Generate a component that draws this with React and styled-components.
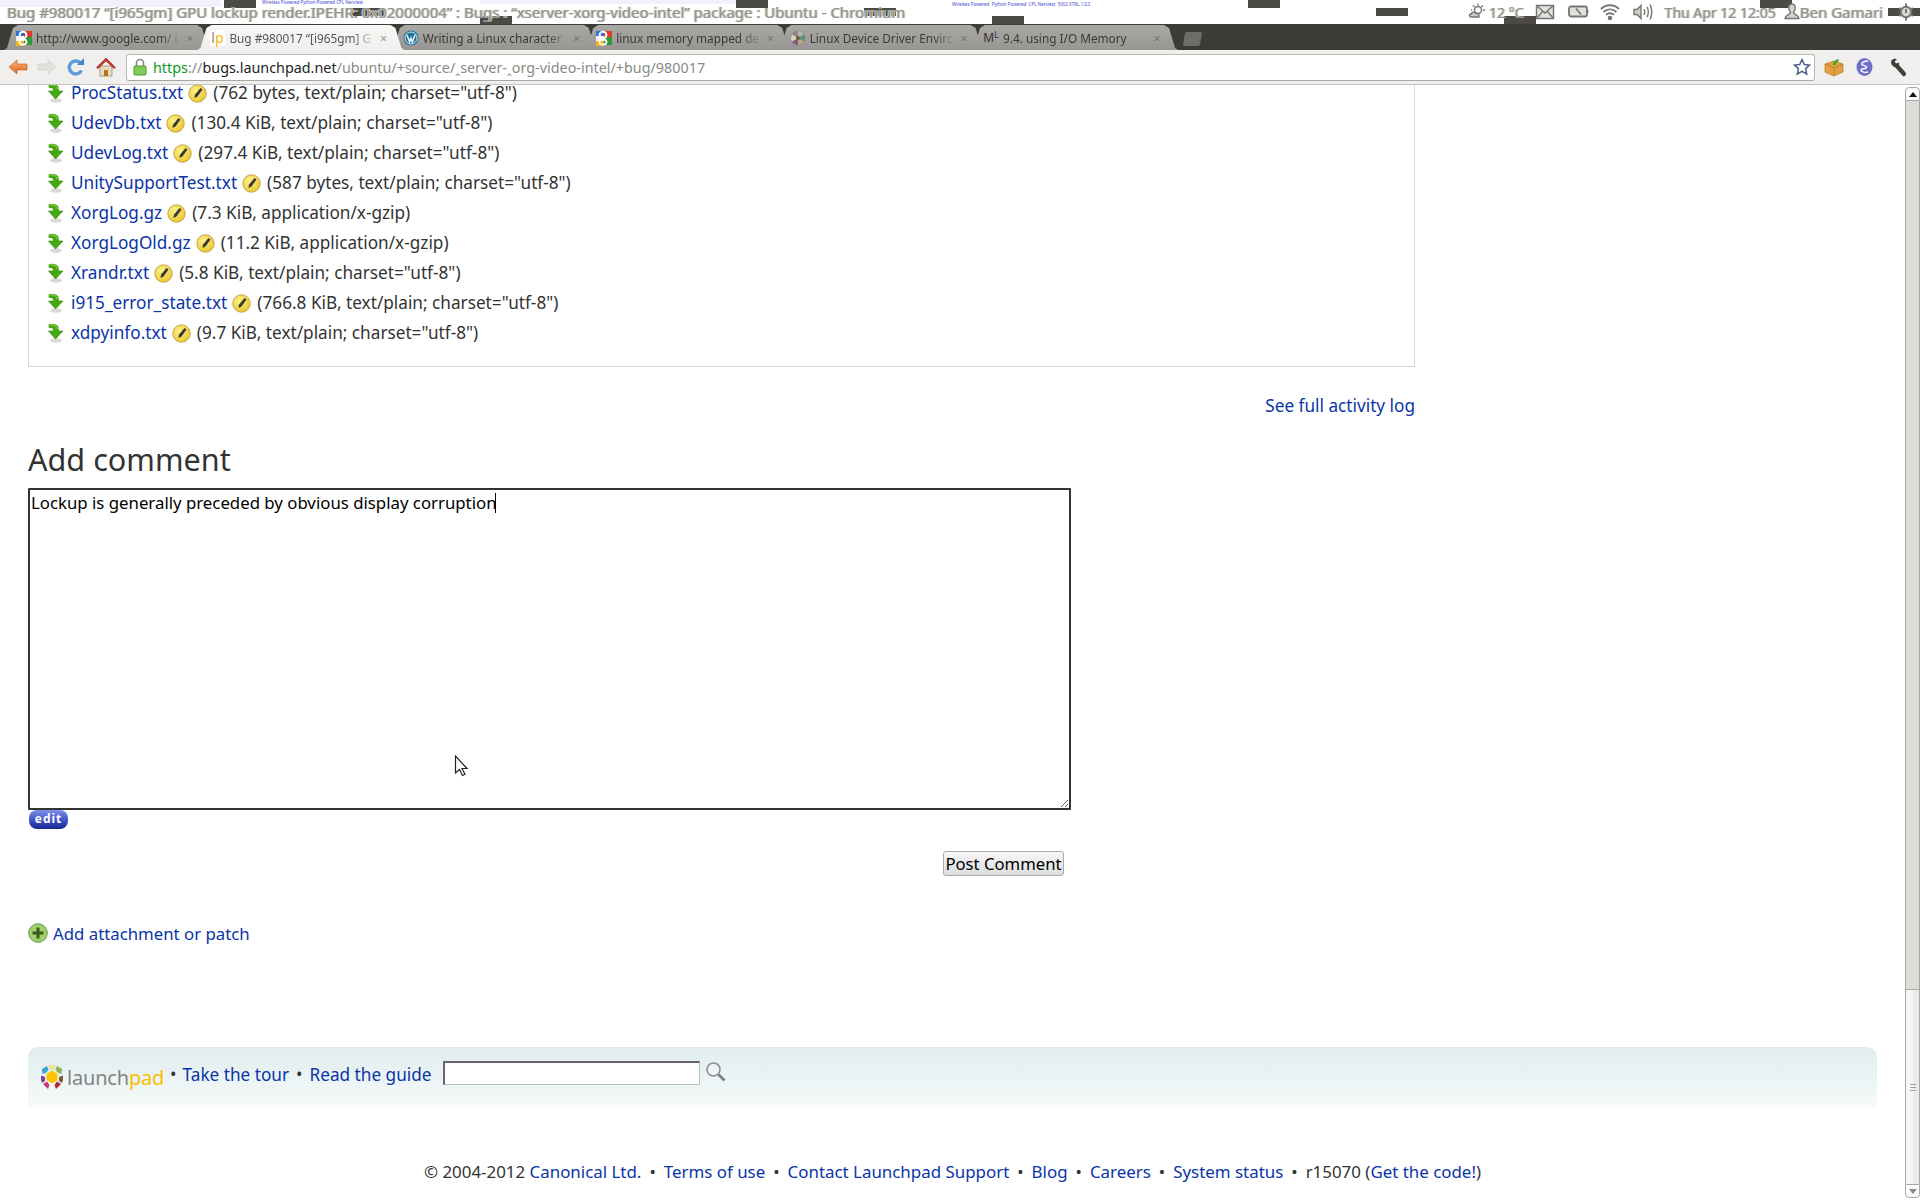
import React from 'react'
import styled, { createGlobalStyle } from 'styled-components'

const FONT = '"Noto Sans", "Open Sans", sans-serif'

const GlobalStyle = createGlobalStyle`
  html, body {
    margin: 0;
    padding: 0;
    background: #fff;
    overflow: hidden;
  }
  body {
    font-family: ${FONT};
    font-size: 17px;
    color: #333;
  }
  * {
    box-sizing: border-box;
  }
`

const Page = styled.div`
  position: relative;
  width: 1920px;
  height: 1200px;
  display: flex;
  flex-direction: column;
  overflow: hidden;
`

/* top panel */
const TopBar = styled.div`
  position: relative;
  height: 24px;
  flex: none;
  background: #fff;
  display: flex;
  align-items: center;
  padding-left: 7px;
  overflow: hidden;
`
const Chip = styled.span`
  position: absolute;
  left: ${p => p.$x}px;
  top: ${p => p.$y}px;
  width: 32px;
  height: 8px;
  background: #4c4a44;
`
const Patch = styled.span`
  position: absolute;
  top: 0;
  left: ${p => p.$x}px;
  width: ${p => p.$w}px;
  height: ${p => p.$h}px;
  background: #f1f0fc;
`
const TinyText = styled.span`
  position: absolute;
  top: ${p => p.$y}px;
  left: ${p => p.$x}px;
  font-size: 4.5px;
  line-height: 5px;
  color: #4848d0;
  white-space: nowrap;
`
const WindowTitle = styled.span`
  position: relative;
  font-size: 15px;
  line-height: 24px;
  color: #94948c;
  text-shadow: -1px 0 0 #b4d6ea, 1px 0 0 #e6cda2;
  white-space: nowrap;
`
const Indicators = styled.div`
  position: relative;
  margin-left: auto;
  display: flex;
  align-items: center;
  height: 24px;
  padding-right: 6px;
`
const PanelText = styled.span`
  font-size: ${p => p.$size || 14}px;
  color: #94948c;
  text-shadow: -1px 0 0 #b4d6ea, 1px 0 0 #e6cda2;
  white-space: nowrap;
  margin-left: ${p => p.$ml || 0}px;
`
const PanelIcon = styled.svg`
  flex: none;
  width: ${p => p.$w || 20}px;
  height: 20px;
  margin-left: ${p => p.$ml || 0}px;
  fill: none;
  stroke: #77756f;
  stroke-width: 1.4;
`

/* tab strip */
const TabStrip = styled.div`
  height: 26px;
  flex: none;
  background: #3c3b37;
  display: flex;
  align-items: flex-end;
  padding-left: 4px;
`
const Tab = styled.div`
  position: relative;
  z-index: ${p => (p.$active ? 2 : 1)};
  width: 207px;
  height: 25px;
  margin-right: -13.6px;
  padding: 0 14px 0 12px;
  display: flex;
  align-items: center;
  background: ${p =>
    p.$active
      ? 'linear-gradient(#f8f7f6, #f0efee)'
      : 'linear-gradient(#a9a8a4, #979692)'};
  clip-path: polygon(0 100%, 3px 92%, 9px 12%, 14px 0, calc(100% - 14px) 0, calc(100% - 9px) 12%, calc(100% - 3px) 92%, 100% 100%);
`
const TabIcon = styled.span`
  flex: none;
  width: 16px;
  height: 16px;
  display: flex;
  align-items: center;
  justify-content: center;
  margin-right: 4px;
`
const TabLabel = styled.span`
  flex: 1;
  min-width: 0;
  overflow: hidden;
  white-space: nowrap;
  font-size: 11.8px;
  color: ${p => (p.$active ? '#555' : '#3a3935')};
  -webkit-mask-image: linear-gradient(to right, #000 86%, rgba(0, 0, 0, 0.15) 100%);
  mask-image: linear-gradient(to right, #000 86%, rgba(0, 0, 0, 0.15) 100%);
`
const TabClose = styled.span`
  flex: none;
  width: 14px;
  margin-left: 4px;
  font-size: 13px;
  color: ${p => (p.$active ? '#999' : '#777672')};
  text-align: center;
`
const NewTab = styled.div`
  width: 17px;
  height: 14px;
  margin: 0 0 4px 20px;
  background: #6e6d69;
  border-radius: 2px;
  transform: skewX(-10deg);
`
const LpMark = styled.span`
  font-size: 14px;
  line-height: 16px;
  color: #888;
  background: #fff;
  padding: 0 1px;
  & > b {
    color: #f8b800;
    font-weight: 400;
  }
`
const MlMark = styled.span`
  font-size: 12px;
  color: #333;
  & > sup {
    font-size: 9px;
    vertical-align: 4px;
    line-height: 0;
  }
`

/* browser toolbar */
const Toolbar = styled.div`
  height: 35px;
  flex: none;
  background: #f0efee;
  border-bottom: 1px solid #c6c5c1;
  display: flex;
  align-items: center;
  padding: 0 13px 0 8px;
`
const NavIcon = styled.svg`
  flex: none;
  width: ${p => p.$w || 20}px;
  height: 20px;
  margin-right: ${p => p.$mr || 0}px;
`
const UrlBox = styled.div`
  flex: 1;
  height: 27px;
  margin-right: 9px;
  background: #fff;
  border: 1px solid #b9b8b3;
  border-bottom-color: #a8a7a2;
  border-radius: 3px;
  display: flex;
  align-items: center;
  padding: 0 3px 0 6px;
`
const UrlText = styled.span`
  margin-left: 6px;
  font-size: 14.35px;
  color: #8a8a88;
  white-space: nowrap;
  & > em {
    font-style: normal;
    color: #0a9c1c;
  }
  & > b {
    font-weight: 400;
    color: #222;
  }
  & > i {
    font-style: normal;
    font-family: "DejaVu Sans", sans-serif;
  }
`
const StarWrap = styled.span`
  margin-left: auto;
  display: flex;
`

/* page area */
const Viewport = styled.div`
  flex: 1;
  min-height: 0;
  display: flex;
`
const Content = styled.main`
  flex: 1;
  min-width: 0;
  padding: 0 28px;
  overflow: hidden;
`
const Narrow = styled.div`
  width: 1387px;
`
const AttachmentBox = styled.section`
  margin-top: -7px;
  padding: 0 0 18px 18px;
  border: 1px solid #d8d8d8;
  border-top: 0;
`
const FileRow = styled.div`
  height: 30px;
  display: flex;
  align-items: center;
  font-size: 17.2px;
  line-height: 30px;
  white-space: nowrap;
`
const Link = styled.a`
  color: #0a34a8;
  text-decoration: none;
  cursor: pointer;
`
const FileLink = styled(Link)`
  margin-left: 6px;
`
const Meta = styled.span`
  margin-left: 6px;
  color: #333;
`
const LogRow = styled.div`
  margin-top: 27px;
  height: 24px;
  line-height: 24px;
  text-align: right;
  font-size: 17.2px;
`
const Heading = styled.h2`
  margin: 21px 0 9px;
  font-size: 30.6px;
  font-weight: 400;
  line-height: 40px;
  color: #333;
`
const CommentForm = styled.form`
  position: relative;
  width: 1043px;
`
const CommentInput = styled.textarea`
  display: block;
  width: 100%;
  height: 322px;
  padding: 1px;
  border: 2px solid #333;
  border-radius: 1px;
  outline: 0;
  resize: both;
  font-family: ${FONT};
  font-size: 16.8px;
  line-height: 24px;
  color: #000;
`
const Caret = styled.span`
  position: absolute;
  left: 467px;
  top: 5px;
  width: 1px;
  height: 20px;
  background: #000;
`
const EditBadge = styled.span`
  display: block;
  width: 39px;
  height: 19px;
  margin-left: 1px;
  border-radius: 8px;
  background: linear-gradient(#7d92ea, #3c52c8 55%, #17268c);
  color: #fff;
  font-size: 12px;
  font-weight: 700;
  letter-spacing: 1px;
  line-height: 18px;
  text-align: center;
`
const FormActions = styled.div`
  margin-top: 22px;
  padding-right: 7px;
  display: flex;
  justify-content: flex-end;
`
const PostButton = styled.button`
  width: 121px;
  height: 25px;
  padding: 0;
  border: 1px solid #a9a9a9;
  border-radius: 3px;
  background: linear-gradient(#f7f7f7, #dedede);
  font-family: ${FONT};
  font-size: 16.7px;
  color: #000;
`
const AddRow = styled.div`
  margin-top: 45px;
  height: 24px;
  display: flex;
  align-items: center;
  gap: 5px;
  font-size: 16.8px;
`
const FooterBand = styled.div`
  margin-top: 102px;
  height: 60px;
  padding: 12px 0 0 12px;
  display: flex;
  align-items: flex-start;
  border-radius: 10px 10px 0 0;
  background: linear-gradient(#dfeced, #f6fbfb);
  font-size: 17.2px;
`
const Logo = styled.div`
  display: flex;
  align-items: center;
  height: 36px;
`
const LogoWord = styled.span`
  margin-left: 3px;
  font-size: 20px;
  color: #85837e;
  letter-spacing: -0.2px;
  & > b {
    font-weight: 400;
    color: #f8c000;
  }
`
const BandLink = styled(Link)`
  line-height: 32px;
  white-space: nowrap;
`
const Bullet = styled.span`
  line-height: ${p => (p.$flat ? 'inherit' : '30px')};
  margin: 0 ${p => p.$gap || 8}px;
  color: #333;
`
const SearchInput = styled.input`
  width: 257px;
  height: 24px;
  margin: 2px 5px 0 12px;
  padding: 0 2px;
  border: 2px inset #bbb;
  border-right-width: 1px;
  border-bottom-width: 1px;
  background: #fff;
`
const SearchIcon = styled.svg`
  width: 22px;
  height: 22px;
  margin-top: 2px;
`
const SiteFooter = styled.footer`
  margin-top: 53px;
  height: 24px;
  line-height: 24px;
  text-align: center;
  font-size: 16.9px;
  white-space: nowrap;
`

/* scrollbar */
const Scrollbar = styled.div`
  flex: none;
  width: 15px;
  padding-bottom: 2px;
  display: flex;
  flex-direction: column;
`
const ScrollButton = styled.div`
  height: 14px;
  margin-top: ${p => (p.$up ? 2 : 0)}px;
  flex: none;
  display: flex;
  align-items: center;
  justify-content: center;
  background: #fbfbfa;
  border: 1px solid #a8a8a8;
  border-radius: ${p => (p.$up ? '4px 4px 0 0' : '0 0 4px 4px')};
  &::after {
    content: '';
    border-left: 4px solid transparent;
    border-right: 4px solid transparent;
    border-bottom: ${p => (p.$up ? '5px solid #111' : '0')};
    border-top: ${p => (p.$up ? '0' : '5px solid #8a8a8a')};
  }
`
const ScrollTrack = styled.div`
  flex: 1;
  display: flex;
  flex-direction: column;
  justify-content: flex-end;
  background: #dcdcd8;
  border-left: 1px solid #a8a8a8;
  border-right: 1px solid #a8a8a8;
`
const ScrollThumb = styled.div`
  height: 195px;
  display: flex;
  flex-direction: column;
  align-items: center;
  justify-content: center;
  gap: 2px;
  border-top: 1px solid #a8a8a8;
  background: linear-gradient(to right, #f7f6f4 55%, #ecebe8 55%);
  & > i {
    display: block;
    width: 6px;
    height: 1px;
    background: #a0a0a0;
  }
`
const MousePointer = styled.svg`
  position: absolute;
  left: 454px;
  top: 755px;
  width: 15px;
  height: 22px;
`

const CHIPS = [
  [224, 0], [352, 8], [480, 16], [736, 0], [864, 8], [992, 16],
  [1248, 0], [1376, 8], [1504, 16], [1760, 0], [1888, 8],
]

const TABS = [
  { icon: 'google', label: 'http://www.google.com/ i' },
  { icon: 'lp', label: 'Bug #980017 “[i965gm] G', active: true },
  { icon: 'wp', label: 'Writing a Linux character I' },
  { icon: 'google', label: 'linux memory mapped dev' },
  { icon: 'wheel', label: 'Linux Device Driver Envirc' },
  { icon: 'ml', label: '9.4. using I/O Memory' },
]

const FILES = [
  ['ProcStatus.txt', '(762 bytes, text/plain; charset="utf-8")'],
  ['UdevDb.txt', '(130.4 KiB, text/plain; charset="utf-8")'],
  ['UdevLog.txt', '(297.4 KiB, text/plain; charset="utf-8")'],
  ['UnitySupportTest.txt', '(587 bytes, text/plain; charset="utf-8")'],
  ['XorgLog.gz', '(7.3 KiB, application/x-gzip)'],
  ['XorgLogOld.gz', '(11.2 KiB, application/x-gzip)'],
  ['Xrandr.txt', '(5.8 KiB, text/plain; charset="utf-8")'],
  ['i915_error_state.txt', '(766.8 KiB, text/plain; charset="utf-8")'],
  ['xdpyinfo.txt', '(9.7 KiB, text/plain; charset="utf-8")'],
]

const GoogleIcon = () => (
  <svg width="16" height="16" viewBox="0 0 16 16">
    <path d="M0 1h8v5H0z" fill="#2a6fdc" />
    <path d="M8 1h8v6H8z" fill="#e03a2e" />
    <path d="M8 7h8v8H8z" fill="#2f9a3c" />
    <path d="M0 6h8v5H0z" fill="#f4f4f4" />
    <path d="M0 11h8v5H0z" fill="#f2b31d" />
    <ellipse cx="7" cy="5" rx="3.4" ry="3.2" fill="none" stroke="#fff" strokeWidth="2" />
    <ellipse cx="7" cy="12" rx="3.6" ry="2.6" fill="none" stroke="#fff" strokeWidth="1.6" />
  </svg>
)

const WordpressIcon = () => (
  <svg width="16" height="16" viewBox="0 0 16 16">
    <circle cx="8" cy="8" r="7.5" fill="#21759b" />
    <circle cx="8" cy="8" r="6" fill="none" stroke="#fff" strokeWidth="0.8" />
    <path d="M4 5l2.6 7L8 8l1.4 4L12 5" fill="none" stroke="#fff" strokeWidth="1.4" />
  </svg>
)

const WheelIcon = () => (
  <svg width="16" height="16" viewBox="0 0 16 16">
    <circle cx="8" cy="8" r="7.5" fill="#8a8a84" />
    <path d="M8 8V1a7 7 0 0 1 6 3.5z" fill="#b7b5a8" />
    <path d="M8 8l6-3.5A7 7 0 0 1 14 11.500z" fill="#5f8f7e" />
    <path d="M8 8l6 3.500A7 7 0 0 1 8 15z" fill="#c4a284" />
    <path d="M8 8v7a7 7 0 0 1-6-3.500z" fill="#7c5f80" />
    <path d="M8 8l-6 3.500A7 7 0 0 1 2 4.500z" fill="#d4d2c8" />
    <circle cx="8" cy="8" r="2" fill="#6a5a3a" />
  </svg>
)

const tabIcons = {
  google: <GoogleIcon />,
  lp: <LpMark>l<b>p</b></LpMark>,
  wp: <WordpressIcon />,
  wheel: <WheelIcon />,
  ml: <MlMark>M<sup>L</sup></MlMark>,
}

const DownArrow = () => (
  <svg width="18" height="22" viewBox="0 0 18 22">
    <ellipse cx="9" cy="18.500" rx="6" ry="2.200" fill="#d8d8d4" />
    <path d="M2 2.500C5 2 9 2 11 4.500L11.500 9H16L8.500 17 1.500 9H6.500L6 6.500C5 5.500 3 5.500 2 5.500z" fill="#44a910" stroke="#2f8a06" strokeWidth="0.6" />
    <path d="M2.500 3C5 2.700 8 3 9.500 5L10 7" fill="none" stroke="#8fdc3e" strokeWidth="1" />
  </svg>
)

const PencilBadge = () => (
  <svg width="19" height="19" viewBox="0 0 19 19" style={{ marginLeft: 5, flex: 'none' }}>
    <defs>
      <radialGradient id="pencilFill" cx="0.4" cy="0.35" r="0.7">
        <stop offset="0" stopColor="#fdf38a" />
        <stop offset="1" stopColor="#e9c62a" />
      </radialGradient>
    </defs>
    <circle cx="9.500" cy="9.500" r="8.700" fill="url(#pencilFill)" stroke="#c9a24a" strokeWidth="1" />
    <path d="M12.500 4l2 1.500-5 7-3 1.500.4-3.200z" fill="#3b3a2e" />
  </svg>
)

const WeatherIcon = () => (
  <PanelIcon $w={18} viewBox="0 0 18 20">
    <circle cx="10" cy="8" r="3.500" />
    <path d="M10 1.500v2M15 3.500l-1.500 1.500M17 8h-2M5 3.500L6.500 5M3 8h1" />
    <path d="M3 15c-2 0-2-3 0-3 .5-2 4-2.500 5-.5 2-.5 3.500 1 3 3.500z" fill="#c9c8c2" />
  </PanelIcon>
)

const MailIcon = () => (
  <PanelIcon $ml={11} viewBox="0 0 20 20">
    <path d="M1.500 3.500h17v13h-17z" fill="#e2e1dc" />
    <path d="M1.500 3.500L10 11l8.500-7.500M1.500 16.500L8 9M18.500 16.500L12 9" />
  </PanelIcon>
)

const BatteryIcon = () => (
  <PanelIcon $ml={13} $w={21} viewBox="0 0 21 20">
    <rect x="1" y="4.500" width="18" height="10" rx="2" fill="#e2e1dc" strokeWidth="1.800" />
    <path d="M19.500 8v3M8 6.500l5 6" strokeWidth="1.800" />
  </PanelIcon>
)

const WifiIcon = () => (
  <PanelIcon $ml={11} viewBox="0 0 20 20">
    <path d="M1 7c5-5 13-5 18 0M3.500 10c4-3.500 9-3.500 13 0M6 12.800c2.500-2 5.500-2 8 0" strokeWidth="1.800" />
    <circle cx="10" cy="16" r="1.600" fill="#77756f" />
  </PanelIcon>
)

const VolumeIcon = () => (
  <PanelIcon $ml={13} viewBox="0 0 20 20">
    <path d="M1 7.500h3l4-4v13l-4-4H1z" fill="#d2d1cb" />
    <path d="M11 7c1 2 1 4 0 6M14 5c1.600 3 1.600 7 0 10M17 2.500c2.300 5 2.300 10 0 15" />
  </PanelIcon>
)

const UserIcon = () => (
  <PanelIcon $ml={8} $w={16} viewBox="0 0 16 20">
    <path d="M8 2c2.500 0 3.500 2 3.200 4.500-.2 2-1.200 3-1.700 4 0 2 5 2 5.500 6H1c.5-4 5.500-4 5.500-6-.5-1-1.500-2-1.700-4C4.500 4 5.500 2 8 2z" fill="#d2d1cb" />
  </PanelIcon>
)

const PowerIcon = () => (
  <PanelIcon $ml={15} $w={16} viewBox="0 0 16 20">
    <circle cx="8" cy="10" r="5.200" fill="#d8d7d1" strokeWidth="2" />
    <path d="M8 1.500v3M8 15.500v3M1 6l2.500 1.500M15 6l-2.500 1.500M1 14l2.500-1.500M15 14l-2.500-1.500M8 7v4" strokeWidth="2" />
  </PanelIcon>
)

export default function App() {
  return (
    <Page>
      <GlobalStyle />
      <TopBar>
        <Patch $x={0} $w={221} $h={7} />
        <Patch $x={480} $w={256} $h={4} />
        {CHIPS.map(([x, y]) => (
          <Chip key={x} $x={x} $y={y} />
        ))}
        <TinyText $x={262} $y={0}>Wireless Powered Python Powered CPL Nerviest</TinyText>
        <TinyText $x={952} $y={2}>Wireless Powered&nbsp; Python Powered&nbsp; CPL Nerviest&nbsp; 5002 XTRL 1/23</TinyText>
        <WindowTitle>
          Bug #980017 “[i965gm] GPU lockup render.IPEHR: 0x02000004” : Bugs : “xserver-xorg-video-intel” package : Ubuntu - Chromium
        </WindowTitle>
        <Indicators>
          <WeatherIcon />
          <PanelText $ml={3}>12 °C</PanelText>
          <MailIcon />
          <BatteryIcon />
          <WifiIcon />
          <VolumeIcon />
          <PanelText $ml={12}>Thu Apr 12 12:05</PanelText>
          <UserIcon />
          <PanelText $size={15}>Ben Gamari</PanelText>
          <PowerIcon />
        </Indicators>
      </TopBar>

      <TabStrip>
        {TABS.map(tab => (
          <Tab key={tab.label} $active={tab.active}>
            <TabIcon>{tabIcons[tab.icon]}</TabIcon>
            <TabLabel $active={tab.active}>{tab.label}</TabLabel>
            <TabClose $active={tab.active}>×</TabClose>
          </Tab>
        ))}
        <NewTab />
      </TabStrip>

      <Toolbar>
        <NavIcon $mr={9} viewBox="0 0 20 20">
          <defs>
            <linearGradient id="backFill" x1="0" y1="0" x2="0" y2="1">
              <stop offset="0" stopColor="#f6b27a" />
              <stop offset="1" stopColor="#dc6a1e" />
            </linearGradient>
          </defs>
          <path d="M1 10l8-7v4h10v6H9v4z" fill="url(#backFill)" stroke="#c8691f" strokeWidth="0.7" />
        </NavIcon>
        <NavIcon $mr={9} viewBox="0 0 20 20">
          <path d="M19 10l-8-7v4H1v6h10v4z" fill="#e2e1de" stroke="#d0cfcc" strokeWidth="0.7" />
        </NavIcon>
        <NavIcon $mr={10} viewBox="0 0 20 20">
          <path d="M15.500 13.500A6.500 6.500 0 1 1 14 5.500" fill="none" stroke="#5b9bd8" strokeWidth="3.400" />
          <path d="M11 8h7V1z" fill="#3f83c8" />
        </NavIcon>
        <NavIcon $mr={10} viewBox="0 0 20 20">
          <path d="M4 9h12v10H4z" fill="#e8dcc4" stroke="#9a8a6a" strokeWidth="0.8" />
          <path d="M8 13h4v6H8z" fill="#b5731f" />
          <path d="M0.500 10.500L10 1l9.500 9.500-1.500 1L10 4l-8 7.500z" fill="#c8372a" stroke="#962218" strokeWidth="0.6" />
        </NavIcon>
        <UrlBox>
          <svg width="14" height="18" viewBox="0 0 14 18">
            <path d="M3.500 8V5a3.500 3.500 0 0 1 7 0v3" fill="none" stroke="#8a8a84" strokeWidth="1.600" />
            <rect x="1" y="8" width="12" height="9" rx="1" fill="#7fca5a" stroke="#4e9a2e" />
          </svg>
          <UrlText>
            <em>https</em>://<b>bugs.launchpad.net</b>/ubuntu/+source/<i>‸</i>server-<i>‸</i>org-video-intel/+bug/980017
          </UrlText>
          <StarWrap>
            <svg width="18" height="18" viewBox="0 0 18 18">
              <path d="M9 1.500l2.300 5 5.200.6-3.900 3.500 1.100 5.400L9 13.300 4.300 16l1.100-5.400L1.500 7.100l5.200-.6z" fill="#fff" stroke="#4c6088" strokeWidth="1.500" />
            </svg>
          </StarWrap>
        </UrlBox>
        <NavIcon $mr={12} viewBox="0 0 20 20">
          <path d="M1 7l9-3 9 3v8l-9 4-9-4z" fill="#e0a044" stroke="#b87820" strokeWidth="0.7" />
          <path d="M1 7l9 4 9-4M10 11v8" fill="none" stroke="#b87820" strokeWidth="0.8" />
          <path d="M9 8c0-3 2-5 5-6l1 2c-2 .5-3 2-3 4z" fill="#3fa81c" />
        </NavIcon>
        <NavIcon $w={17} $mr={17} viewBox="0 0 17 20">
          <ellipse cx="8.500" cy="10" rx="8" ry="9" fill="#6f6fc8" />
          <path d="M12 4C8 4 5 6 6 7.500s5 1 4.500 3S5 11 5 13s4 3 7 2" fill="none" stroke="#fff" strokeWidth="1.400" />
        </NavIcon>
        <NavIcon $w={17} viewBox="0 0 17 20">
          <path d="M6.500 8.500L14 17" stroke="#3f3e3a" strokeWidth="4.200" strokeLinecap="round" />
          <path d="M1 4.500C2 2 4.500 1.200 6.800 2.200L4.600 4.600 6.400 7 9 5.200c.6 2-.2 4.200-2 5C4.500 11 1 8.500 1 4.500z" fill="#3f3e3a" />
        </NavIcon>
      </Toolbar>

      <Viewport>
        <Content>
          <Narrow>
            <AttachmentBox>
              {FILES.map(([name, meta]) => (
                <FileRow key={name}>
                  <DownArrow />
                  <FileLink>{name}</FileLink>
                  <PencilBadge />
                  <Meta>{meta}</Meta>
                </FileRow>
              ))}
            </AttachmentBox>
            <LogRow>
              <Link>See full activity log</Link>
            </LogRow>
            <Heading>Add comment</Heading>
            <CommentForm>
              <CommentInput readOnly defaultValue="Lockup is generally preceded by obvious display corruption" />
              <Caret />
              <EditBadge>edit</EditBadge>
              <FormActions>
                <PostButton type="button">Post Comment</PostButton>
              </FormActions>
            </CommentForm>
            <AddRow>
              <svg width="20" height="20" viewBox="0 0 20 20">
                <circle cx="10" cy="10" r="9.300" fill="#9fd06a" stroke="#5f9a4a" />
                <path d="M8.500 4.500h3v4h4v3h-4v4h-3v-4h-4v-3h4z" fill="#3e5a22" />
              </svg>
              <Link>Add attachment or patch</Link>
            </AddRow>
          </Narrow>

          <FooterBand>
            <Logo>
              <svg width="24" height="26" viewBox="0 0 24 26">
                <path d="M8 1.500l4-1 4 1-1.500 4h-5z" fill="#e8e4a0" />
                <path d="M7 2L2 5l.5 5 4-1.500 2-3z" fill="#3aa6d0" />
                <path d="M17 2l5 3-.5 5-4-1.500-2-3z" fill="#8fb04a" />
                <path d="M1 11.500l4 1.500v4l-3 2-1-3z" fill="#8a3a9a" />
                <path d="M23 11.500l-4 1.500v4l3 2 1-3z" fill="#7a5a2a" />
                <path d="M3 20l4-2.500 2.500 3.500-1.500 4z" fill="#c83a7a" />
                <path d="M21 20l-4-2.500-2.500 3.500 1.500 4z" fill="#b02a2a" />
                <path d="M12 6.500l5.500 3.200v6.600L12 19.500l-5.500-3.200V9.700z" fill="#ffc400" />
              </svg>
              <LogoWord>launch<b>pad</b></LogoWord>
            </Logo>
            <Bullet $gap={6}>•</Bullet>
            <BandLink>Take the tour</BandLink>
            <Bullet $gap={7}>•</Bullet>
            <BandLink>Read the guide</BandLink>
            <SearchInput />
            <SearchIcon viewBox="0 0 22 22">
              <circle cx="8.500" cy="8.500" r="6.500" fill="#eef4f6" stroke="#8b8f90" strokeWidth="1.500" />
              <path d="M13.500 13.500l6 6" stroke="#7c8082" strokeWidth="2.800" />
            </SearchIcon>
          </FooterBand>

          <SiteFooter>
            © 2004-2012 <Link>Canonical Ltd.</Link>
            <Bullet $flat>•</Bullet>
            <Link>Terms of use</Link>
            <Bullet $flat>•</Bullet>
            <Link>Contact Launchpad Support</Link>
            <Bullet $flat>•</Bullet>
            <Link>Blog</Link>
            <Bullet $flat>•</Bullet>
            <Link>Careers</Link>
            <Bullet $flat>•</Bullet>
            <Link>System status</Link>
            <Bullet $flat>•</Bullet>
            r15070 (<Link>Get the code!</Link>)
          </SiteFooter>
        </Content>
        <Scrollbar>
          <ScrollButton $up />
          <ScrollTrack>
            <ScrollThumb>
              <i />
              <i />
              <i />
            </ScrollThumb>
          </ScrollTrack>
          <ScrollButton />
        </Scrollbar>
      </Viewport>

      <MousePointer viewBox="0 0 15 22">
        <path d="M1.500 1v17l4-3.500 3 6 2.500-1.200-3-5.800h5z" fill="#fff" stroke="#222" strokeWidth="1.200" />
      </MousePointer>
    </Page>
  )
}
